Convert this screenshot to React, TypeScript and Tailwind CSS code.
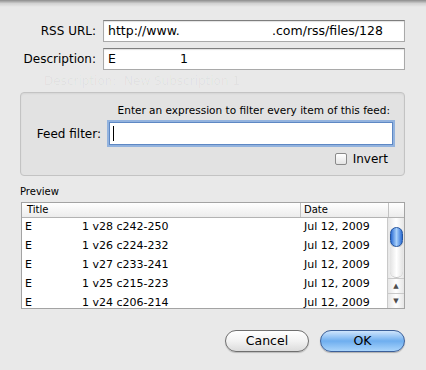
import React from 'react';

const rows = [
  { a: 'E', b: '1 v28 c242-250', date: 'Jul 12, 2009' },
  { a: 'E', b: '1 v26 c224-232', date: 'Jul 12, 2009' },
  { a: 'E', b: '1 v27 c233-241', date: 'Jul 12, 2009' },
  { a: 'E', b: '1 v25 c215-223', date: 'Jul 12, 2009' },
  { a: 'E', b: '1 v24 c206-214', date: 'Jul 12, 2009' },
];

const Field: React.FC<{ children?: React.ReactNode; className?: string }> = ({ children, className }) => (
  <div
    className={`flex items-center h-[22px] bg-white border border-[#a9a9a9] border-t-[#7e7e7e] shadow-[inset_0_1px_1px_rgba(0,0,0,0.12)] text-[12.5px] ${className || ''}`}
  >
    {children}
  </div>
);

const ScrollBar: React.FC = () => (
  <div className="w-[17px] shrink-0 flex flex-col border-l border-[#c9c9c9] bg-gradient-to-r from-[#e6e6e6] via-white to-[#e6e6e6]">
    {/* track */}
    <div className="flex-1 flex flex-col items-center pt-[9px]">
      <div className="w-[13px] h-[20px] rounded-full border border-[#24549f] bg-gradient-to-r from-[#2a6bd2] via-[#a8d0fa] to-[#2a6bd2] shadow-[0_1px_1px_rgba(0,0,0,0.25)]" />
      <div className="w-[13px] flex-1 rounded-b-full border-b border-[#c2c2c2] bg-gradient-to-r from-[#e3e3e3] via-white to-[#e3e3e3]" />
    </div>
    {/* arrows */}
    <div className="h-[15px] flex items-center justify-center border-t border-[#c9c9c9] text-[7px] leading-none text-[#4d4d4d]">▲</div>
    <div className="h-[15px] flex items-center justify-center border-t border-[#c9c9c9] text-[7px] leading-none text-[#4d4d4d]">▼</div>
  </div>
);

export default function App() {
  return (
    <div className="relative w-[426px] h-[370px] overflow-hidden bg-[#e9e9e9] text-black font-['DejaVu_Sans',sans-serif]">
      {/* sheet shadow along the top */}
      <div className="absolute inset-x-0 top-0 h-[7px] bg-gradient-to-b from-black/40 via-black/10 to-transparent" />

      <div className="pt-[20px] pr-[21px]">
        <div className="flex items-center">
          <div className="w-[96px] text-right text-[12px]">RSS URL:</div>
          <Field className="ml-[7px] flex-1 pl-[4px]">
            <span className="w-[164px]">http://www.</span>
            <span>.com/rss/files/128</span>
          </Field>
        </div>
        <div className="flex items-center mt-[6px]">
          <div className="w-[96px] text-right text-[12px]">Description:</div>
          <Field className="ml-[7px] flex-1 pl-[4px]">
            <span className="w-[72px]">E</span>
            <span>1</span>
          </Field>
        </div>

        {/* window behind the sheet, seen through it */}
        <div className="h-[22px] flex items-center pl-[44px] text-[12px] text-black/[0.04]">
          Description:&nbsp;&nbsp;New Subscription 1
        </div>

        <div className="ml-[20px] h-[84px] rounded-[4px] border border-[#c3c3c3] bg-[#e2e2e2] shadow-[inset_0_1px_2px_rgba(0,0,0,0.06)]">
          <div className="pt-[10px] pr-[14px] h-[24px] text-right text-[10.5px] leading-[14px]">
            Enter an expression to filter every item of this feed:
          </div>
          <div className="flex items-center mt-[5px]">
            <div className="w-[80px] text-right text-[12px]">Feed filter:</div>
            <div className="ml-[8px] mr-[11px] flex-1 h-[23px] bg-white border border-[#5e88c4] shadow-[0_0_0_2px_rgba(120,163,220,0.75)] flex items-center pl-[3px]">
              <div className="w-px h-[15px] bg-black" />
            </div>
          </div>
          <div className="flex items-center justify-end mt-[8px] pr-[16px] h-[12px]">
            <div className="w-[12px] h-[12px] rounded-[2px] border border-[#8a8a8a] bg-gradient-to-b from-white to-[#e4e4e4]" />
            <span className="ml-[6px] text-[12px] leading-none">Invert</span>
          </div>
        </div>

        <div className="mt-[10px] pl-[20px] text-[10px] leading-[12px]">Preview</div>

        <div className="mt-[4px] ml-[21px] h-[107px] border border-[#a3a3a3] bg-white flex flex-col overflow-hidden">
          <div className="h-[15px] shrink-0 flex text-[10px] leading-[14px] border-b border-[#b3b3b3] bg-gradient-to-b from-white to-[#ececec]">
            <div className="w-[279px] pl-[5px] border-r border-[#c2c2c2]">Title</div>
            <div className="w-[88px] pl-[3px] border-r border-[#c2c2c2]">Date</div>
            <div className="flex-1" />
          </div>
          <div className="flex-1 flex min-h-0">
            <div className="flex-1 overflow-hidden">
              {rows.map((r, i) => (
                <div key={i} className="h-[19px] flex items-center text-[11px]">
                  <div className="w-[279px] flex">
                    <span className="pl-[3px] w-[60px]">{r.a}</span>
                    <span>{r.b}</span>
                  </div>
                  <div className="pl-[3px]">{r.date}</div>
                </div>
              ))}
            </div>
            <ScrollBar />
          </div>
        </div>

        <div className="mt-[21px] flex justify-end gap-[11px]">
          <button className="w-[84px] h-[22px] rounded-full border border-[#6f6f6f] bg-gradient-to-b from-white via-[#f2f2f2] to-[#dcdcdc] shadow-[0_1px_1px_rgba(0,0,0,0.2)] text-[12.5px] leading-none">
            Cancel
          </button>
          <button className="w-[85px] h-[22px] rounded-full border border-[#3b5f99] bg-gradient-to-b from-[#cfe5fc] via-[#6eaeef] to-[#a9d4fb] shadow-[0_1px_1px_rgba(0,0,0,0.25)] text-[12.5px] leading-none">
            OK
          </button>
        </div>
      </div>
    </div>
  );
}
